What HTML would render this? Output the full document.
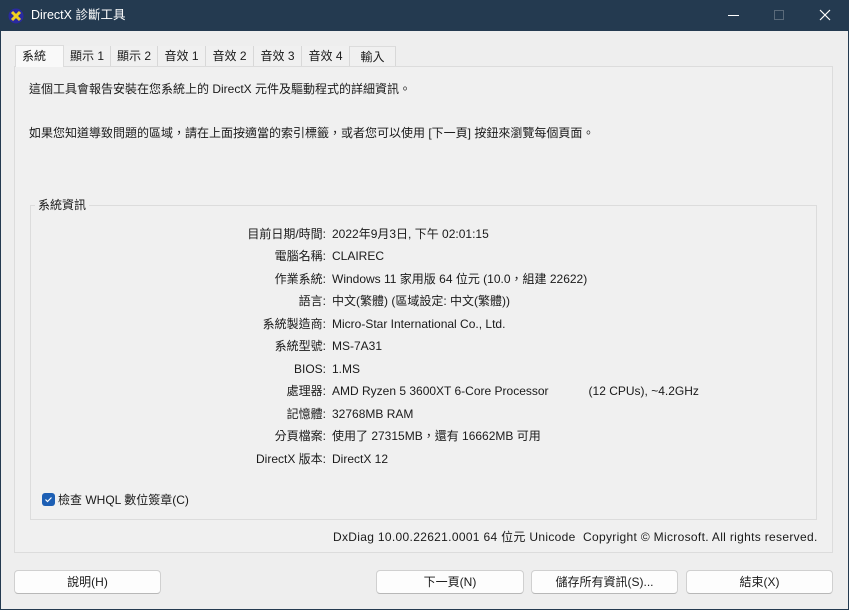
<!DOCTYPE html>
<html><head><meta charset="utf-8"><style>
*{margin:0;padding:0;box-sizing:border-box}
body{width:849px;height:610px;overflow:hidden;background:#243a50;font-family:"Liberation Sans","Noto Sans CJK TC",sans-serif;font-size:12px;line-height:16px;color:#1a1a1a;position:relative}
.win{position:absolute;left:1px;top:31px;width:847px;height:578px;background:#eeeeee}
.title{position:absolute;left:0;top:0;width:849px;height:31px;color:#fff;font-size:12.5px}
.abs{position:absolute;white-space:nowrap}
.tab{position:absolute;top:46px;height:20px;border-right:1px solid #d8d8d8;background:#f0f0f0;padding-top:2px;text-align:center;font-size:12px}
.panel{position:absolute;left:14px;top:66px;width:819px;height:487px;background:#f0f0f0;border:1px solid #dcdcdc}
.grp{position:absolute;left:30px;top:205px;width:787px;height:315px;border:1px solid #dcdcdc}
.lab{position:absolute;right:523px;text-align:right;white-space:nowrap;height:16px}
.val{position:absolute;left:332px;white-space:nowrap;height:16px}
.btn{position:absolute;top:570px;height:24px;background:#fdfdfd;border:1px solid #d0d0d0;border-bottom-color:#b8b8b8;border-radius:4px;text-align:center;line-height:22px}
</style></head><body>
<div class="title">
<svg class="abs" style="left:8px;top:8px" width="16" height="16" viewBox="0 0 16 16"><circle cx="8" cy="8" r="7.5" fill="#2a2aa0"/><path d="M4 4 L12 12 M12 4 L4 12" stroke="#f0d020" stroke-width="3"/></svg>
<span class="abs" style="left:31px;top:7px">DirectX 診斷工具</span>
<div class="abs" style="left:728px;top:15px;width:11px;height:1px;background:#fff"></div>
<div class="abs" style="left:774px;top:10px;width:10px;height:10px;border:1px solid #5a6a7a"></div>
<svg class="abs" style="left:819px;top:9px" width="12" height="12"><path d="M1 1L11 11M11 1L1 11" stroke="#fff" stroke-width="1.2"/></svg>
</div>
<div class="win"></div>
<div class="panel"></div>
<div class="tab" style="left:15px;width:49px;top:45px;height:22px;background:#f9f9f9;border:1px solid #dcdcdc;border-bottom:none;text-align:left;padding-left:6px">系統</div>
<div class="tab" style="left:64px;width:47px">顯示 1</div>
<div class="tab" style="left:111px;width:47px">顯示 2</div>
<div class="tab" style="left:158px;width:48px">音效 1</div>
<div class="tab" style="left:206px;width:48px">音效 2</div>
<div class="tab" style="left:254px;width:48px">音效 3</div>
<div class="tab" style="left:302px;width:48px">音效 4</div>
<div class="tab" style="left:350px;width:46px;border-top:1px solid #dcdcdc">輸入</div>
<span class="abs" style="left:29px;top:81px">這個工具會報告安裝在您系統上的 DirectX 元件及驅動程式的詳細資訊。</span>
<span class="abs" style="left:29px;top:125px">如果您知道導致問題的區域，請在上面按適當的索引標籤，或者您可以使用 [下一頁] 按鈕來瀏覽每個頁面。</span>
<div class="grp"></div>
<span class="abs" style="left:35px;top:197px;background:#f0f0f0;padding:0 3px">系統資訊</span>
<div class="lab" style="top:226px">目前日期/時間:</div><div class="val" style="top:226px">2022年9月3日, 下午 02:01:15</div>
<div class="lab" style="top:248px">電腦名稱:</div><div class="val" style="top:248px">CLAIREC</div>
<div class="lab" style="top:271px">作業系統:</div><div class="val" style="top:271px">Windows 11 家用版 64 位元 (10.0，組建 22622)</div>
<div class="lab" style="top:293px">語言:</div><div class="val" style="top:293px">中文(繁體) (區域設定: 中文(繁體))</div>
<div class="lab" style="top:316px">系統製造商:</div><div class="val" style="top:316px">Micro-Star International Co., Ltd.</div>
<div class="lab" style="top:338px">系統型號:</div><div class="val" style="top:338px">MS-7A31</div>
<div class="lab" style="top:361px">BIOS:</div><div class="val" style="top:361px">1.MS</div>
<div class="lab" style="top:383px">處理器:</div><div class="val" style="top:383px">AMD Ryzen 5 3600XT 6-Core Processor&nbsp;&nbsp;&nbsp;&nbsp;&nbsp;&nbsp;&nbsp;&nbsp;&nbsp;&nbsp;&nbsp;&nbsp;(12 CPUs), ~4.2GHz</div>
<div class="lab" style="top:406px">記憶體:</div><div class="val" style="top:406px">32768MB RAM</div>
<div class="lab" style="top:428px">分頁檔案:</div><div class="val" style="top:428px">使用了 27315MB，還有 16662MB 可用</div>
<div class="lab" style="top:451px">DirectX 版本:</div><div class="val" style="top:451px">DirectX 12</div>
<div class="abs" style="left:42px;top:493px;width:13px;height:13px;background:#1d5fb4;border-radius:3px"></div>
<svg class="abs" style="left:42px;top:493px" width="13" height="13"><path d="M3.5 6.5L5.5 8.5L9.5 4.5" stroke="#fff" stroke-width="1.2" fill="none"/></svg>
<span class="abs" style="left:58px;top:492px">檢查 WHQL 數位簽章(C)</span>
<span class="abs" style="left:333px;top:529px;letter-spacing:0.32px">DxDiag 10.00.22621.0001 64 位元 Unicode&nbsp; Copyright © Microsoft. All rights reserved.</span>
<div class="btn" style="left:14px;width:147px">說明(H)</div>
<div class="btn" style="left:376px;width:148px">下一頁(N)</div>
<div class="btn" style="left:531px;width:147px">儲存所有資訊(S)...</div>
<div class="btn" style="left:686px;width:147px">結束(X)</div>
</body></html>
